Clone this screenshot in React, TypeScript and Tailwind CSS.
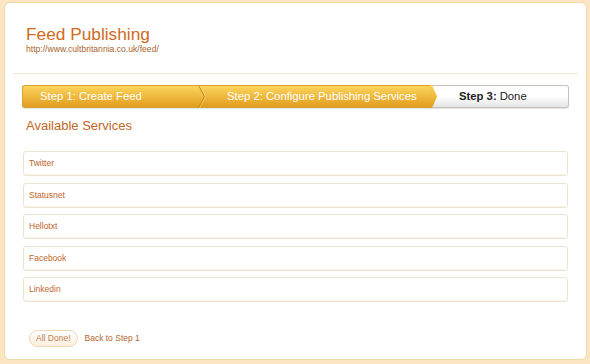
import type { ReactNode } from "react";

const services = ["Twitter", "Statusnet", "Hellotxt", "Facebook", "Linkedin"];

function Chevron() {
  // the pointed divider between two gold steps of the wizard bar
  return (
    <svg
      className="absolute top-[-1px] left-[-2px] h-[23px] w-[10px]"
      viewBox="0 0 10 23"
      preserveAspectRatio="none"
    >
      <path d="M0.5 0 L6.5 11.5 L0.5 23" fill="none" stroke="#b98418" strokeWidth="1" />
      <path d="M1.5 0 L7.5 11.5 L1.5 23" fill="none" stroke="#fde08a" strokeWidth="0.8" opacity="0.7" />
    </svg>
  );
}

function Step({ children, className }: { children: ReactNode; className: string }) {
  return <div className={`relative flex items-center border-y ${className}`}>{children}</div>;
}

export default function App() {
  return (
    <div className="h-[364px] w-[590px] bg-[#fbe5c2] pt-[2px] pl-[4px] pr-[3px] pb-[4px] font-['Liberation_Sans',Arial,sans-serif]">
      <div className="flex h-full flex-col rounded-[6px] border border-[#f2d7ab] bg-white">
        <div className="px-[21px] pt-[21px]">
          <h1 className="text-[17.3px] leading-[20px] text-[#cf6a1d]">Feed Publishing</h1>
          <p className="text-[8.6px] leading-[10px] text-[#a8652b]">http://www.cultbritannia.co.uk/feed/</p>
        </div>

        <div className="mx-[8px] mt-[19px] h-px bg-[#f6e8d0]" />

        <div className="mx-[17px] mt-[11px] flex h-[23px] rounded-[3px] text-[11.3px] text-white shadow-[0_1px_1px_rgba(0,0,0,0.12)]">
          <Step className="w-[178px] rounded-l-[3px] border-l border-[#d6a23a] bg-gradient-to-b from-[#fcd45a] to-[#e19d1a] pl-[17px]">
            Step 1: Create Feed
          </Step>
          <Step className="flex-1 border-[#d6a23a] bg-gradient-to-b from-[#fcd45a] to-[#e19d1a] pl-[27px]">
            <Chevron />
            Step 2: Configure Publishing Services
          </Step>
          <Step className="w-[139px] rounded-r-[3px] border-r border-[#c9c2b4] bg-gradient-to-b from-white via-white to-[#e4e4e4] pl-[29px] text-[#222]">
            <svg className="absolute top-[-1px] left-0 h-[23px] w-[8px]" viewBox="0 0 8 23" preserveAspectRatio="none">
              <defs>
                <linearGradient id="gold" x1="0" y1="0" x2="0" y2="1">
                  <stop offset="0" stopColor="#fcd45a" />
                  <stop offset="1" stopColor="#e19d1a" />
                </linearGradient>
              </defs>
              <path d="M0 0 L2 0 L7 11.5 L2 23 L0 23 Z" fill="url(#gold)" />
            </svg>
            <span className="font-bold">Step 3:</span>
            <span className="ml-[3px]">Done</span>
          </Step>
        </div>

        <h2 className="mt-[10px] px-[21px] text-[13px] leading-[16px] text-[#c0651f]">Available Services</h2>

        <ul className="mx-[18px] mt-[17px] flex flex-col gap-[6.5px]">
          {services.map((name) => (
            <li
              key={name}
              className="flex h-[25px] items-center rounded-[3px] border border-[#eee3d0] bg-white pl-[5px] text-[8.5px] text-[#c0652a] shadow-[inset_0_-1px_0_#faf5ec]"
            >
              {name}
            </li>
          ))}
        </ul>

        <div className="mt-auto mb-[12px] flex items-center pl-[24px]">
          <button
            type="button"
            className="h-[17px] rounded-full border border-[#f0d4b4] bg-gradient-to-b from-white to-[#fbeedd] px-[6px] text-[8.5px] text-[#b98058]"
          >
            All Done!
          </button>
          <a className="ml-[7px] text-[8.5px] text-[#b3662c]">Back to Step 1</a>
        </div>
      </div>
    </div>
  );
}
